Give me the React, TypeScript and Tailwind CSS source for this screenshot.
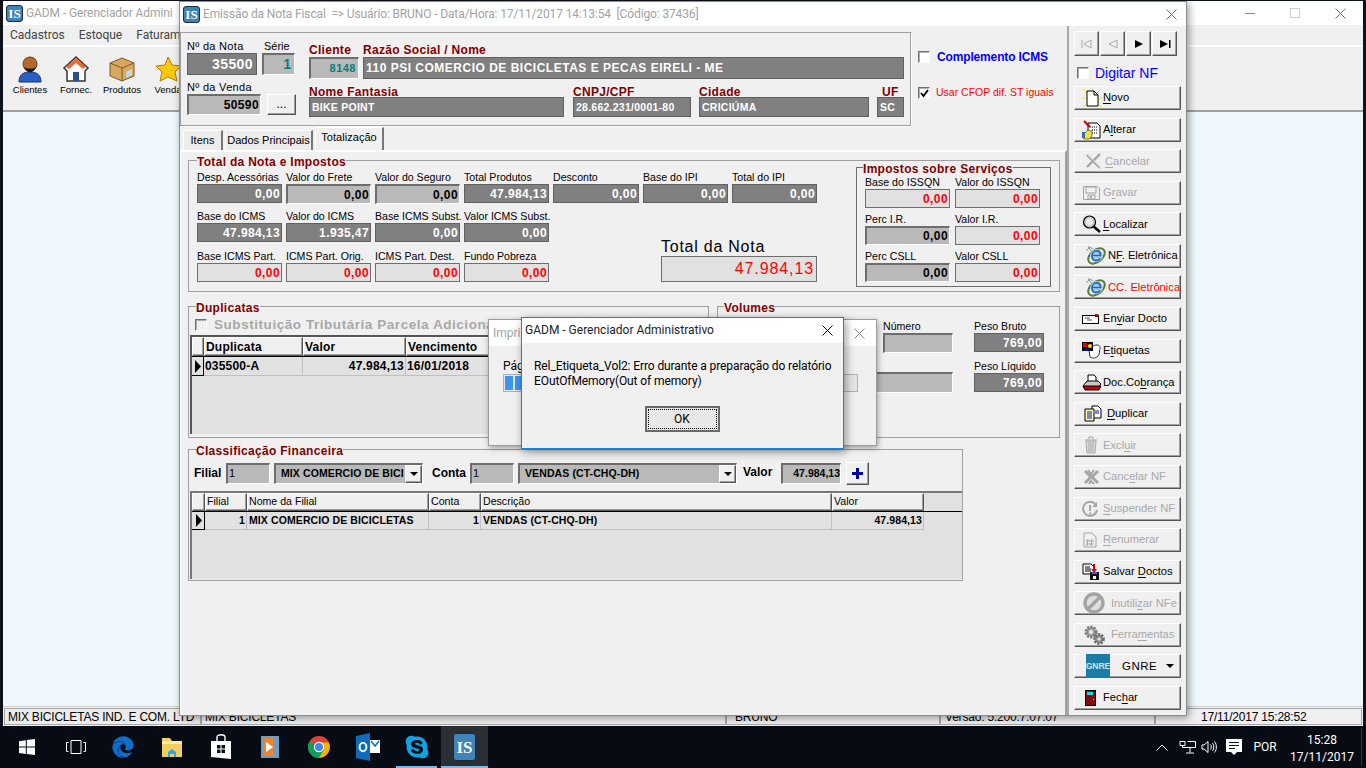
import React from 'react';
import { FaEdge, FaSkype } from 'react-icons/fa';

// --- small drawings used by the toolbar, the side buttons and the taskbar ---

const IsLogo: React.FC<{ size?: string }> = ({ size = 'w-[17px] h-[17px] text-[13px]' }) => (
  <span className={`${size} inline-flex items-center justify-center rounded-[3px] border border-[#1d2a35] bg-[#3d84b8] text-white font-bold leading-none [font-family:'Liberation_Serif',serif]`}>
    IS
  </span>
);

const Svg: React.FC<{ w?: number; h?: number; box?: string; children: React.ReactNode }> = ({ w = 20, h = 20, box, children }) => (
  <svg width={w} height={h} viewBox={box ?? `0 0 ${w} ${h}`} className="shrink-0">{children}</svg>
);

const PersonIcon = () => (
  <Svg w={28} h={28}>
    <path d="M3 27c0-7 4-10 11-10s11 3 11 10z" fill="#2a5fc4" stroke="#12306e" />
    <circle cx="14" cy="9" r="7" fill="#b5692b" stroke="#6b3a14" />
    <path d="M8 12c2 7 10 7 12 0-2 2-10 2-12 0z" fill="#1c1c1c" />
  </Svg>
);
const HouseIcon = () => (
  <Svg w={28} h={28}>
    <path d="M14 2 2 13l3 3v10h18V16l3-3z" fill="#fff" stroke="#333" strokeWidth="1.5" />
    <path d="M14 3 4 12l3 2 7-6 7 6 3-2z" fill="#ee6a2c" />
    <rect x="11" y="17" width="6" height="9" fill="#2c4f8f" />
  </Svg>
);
const BoxIcon = () => (
  <Svg w={28} h={28}>
    <path d="M14 3 2 8v13l12 5 12-5V8z" fill="#d9a860" stroke="#7c5a25" />
    <path d="M2 8l12 5 12-5M14 13v13" fill="none" stroke="#7c5a25" />
    <path d="M18 17l6-3v6l-6 3z" fill="#c7d6ec" />
  </Svg>
);
const StarIcon = () => (
  <Svg w={28} h={28}>
    <path d="M14 2l4 8 9 1-6 6 2 9-9-4-8 4 2-9-6-6 9-1z" fill="#fbc70f" stroke="#b07c06" />
  </Svg>
);

const NovoIcon = () => (
  <Svg>
    <g stroke="#f5ea00" strokeWidth="1"><path d="M1 1l4 4M19 1l-4 4M1 19l4-3M19 19l-4-3M0 10h3M17 10h3M10 0v2" /></g>
    <path d="M5 3h7l4 4v11H5z" fill="#fff" stroke="#000" />
    <path d="M12 3v4h4" fill="none" stroke="#000" />
  </Svg>
);
const AlterarIcon = () => (
  <Svg>
    <path d="M6 3h9l3 3v12H6z" fill="#fff" stroke="#000" />
    <path d="M8 7h7M10 10h6M10 13h6" stroke="#000" strokeDasharray="1 1" />
    <path d="M2 1l6 6" stroke="#c00000" strokeWidth="2" />
    <path d="M0 13h3l3-3 4 1v5l-3 3H2l-2-2z" fill="#f2e23c" stroke="#444" strokeWidth=".7" />
    <rect x="0" y="12" width="3" height="6" fill="#2f6fb5" />
  </Svg>
);
const XIcon = () => (
  <Svg>
    <path d="M3 4l13 13M16 3 3 16" stroke="#a6a6a6" strokeWidth="2.4" />
    <path d="M4 4l13 13" stroke="#fff" strokeWidth=".6" />
  </Svg>
);
const FloppyIcon = () => (
  <Svg>
    <path d="M1.5 3.5h14l2 2v11h-16z" fill="none" stroke="#a3a3a3" />
    <rect x="4" y="4" width="10" height="6" fill="none" stroke="#a3a3a3" />
    <rect x="6" y="12" width="7" height="4" fill="none" stroke="#a3a3a3" />
    <rect x="8" y="13" width="2" height="2" fill="#a3a3a3" />
  </Svg>
);
const LoupeIcon = () => (
  <Svg>
    <path d="M11 12l7 6" stroke="#000" strokeWidth="2.4" />
    <circle cx="7.5" cy="8" r="6" fill="#d3d3d3" stroke="#000" strokeWidth="1.2" />
    <circle cx="7.5" cy="8" r="4" fill="#ececec" stroke="#a0a0a0" strokeDasharray="1 1" />
  </Svg>
);
const EIcon: React.FC = () => (
  <Svg w={22} h={21}>
    <path d="M1 6 5 2l3 2M3 1l3 5" stroke="#777" strokeWidth=".8" fill="none" />
    <ellipse cx="11.5" cy="11" rx="9.5" ry="6" transform="rotate(-40 11.5 11)" fill="none" stroke="#5b7a3a" strokeWidth="2" />
    <circle cx="11.5" cy="10.5" r="6.4" fill="#a8cbe8" />
    <path d="M7 10.5h8.5c0-3-1.7-4.6-4-4.6-2.6 0-4.5 2-4.500 4.900s1.900 4.700 4.400 4.700c1.700 0 3-.7 3.800-2" fill="none" stroke="#1e6cb0" strokeWidth="1.6" />
  </Svg>
);
const MailIcon = () => (
  <Svg w={18} h={12}>
    <rect x=".5" y="2.5" width="16" height="8" fill="#fff" stroke="#000" />
    <path d="M3 5h5M5 7h5" stroke="#555" />
    <rect x="13" y="1" width="3" height="3" fill="#c00000" />
    <rect x="15" y="1" width="1.5" height="1.5" fill="#00a000" />
  </Svg>
);
const TagsIcon = () => (
  <Svg w={20} h={17}>
    <path d="M11 4c4-2 8-1 7 3-1 2 0 5-2 7-3 3-6 2-8 1L7 8z" fill="#fff" stroke="#000" strokeWidth=".8" />
    <rect x="0" y="0" width="11" height="9" fill="#000" />
    <rect x="1" y="1" width="4" height="4" fill="#e00000" />
    <circle cx="8" cy="4" r="2" fill="#f5e400" />
    <path d="M2 9l2.500-3L7 9z" fill="#0018c0" />
  </Svg>
);
const PrinterIcon = () => (
  <Svg w={20} h={17}>
    <path d="M6 1h6l2 2v5H6z" fill="#fff" stroke="#000" />
    <path d="M5 7h11l3 3-2 3H2l-1-1z" fill="#c7c7c7" stroke="#000" />
    <path d="M1 12h18l-2 4H3z" fill="#c40000" stroke="#000" />
  </Svg>
);
const DocsIcon = () => (
  <Svg w={18} h={17}>
    <path d="M8 1h6l3 3v9H8z" fill="#fff" stroke="#000" />
    <path d="M1 4h9v12H1z" fill="#fff8b0" stroke="#000" />
    <path d="M3 7h5M3 9h5M3 11h5M3 13h5" stroke="#0018c0" />
    <path d="M11 6h4M11 8h4" stroke="#0018c0" />
  </Svg>
);
const TrashIcon = () => (
  <Svg w={14} h={18}>
    <path d="M1 4h12M5 3V1h4v2" stroke="#a8a8a8" fill="none" />
    <path d="M2 5h10l-1 12H3z" fill="#dcdcdc" stroke="#a8a8a8" />
    <path d="M5 6v10M7 6v10M9 6v10" stroke="#a8a8a8" />
  </Svg>
);
const XBoldIcon = () => (
  <Svg>
    <path d="M3 4l6 6-6 6M16 4l-6 6 6 6" stroke="#a6a6a6" strokeWidth="3" fill="none" />
    <path d="M6 3l3 4 3-4M7 17l2-3 3 3" stroke="#a6a6a6" strokeWidth="2" fill="none" />
  </Svg>
);
const SuspendIcon = () => (
  <Svg w={16} h={16}>
    <path d="M14 4A7 7 0 1 0 15 9" stroke="#a6a6a6" strokeWidth="2" fill="none" />
    <path d="M15 1v5h-5z" fill="#a6a6a6" />
    <path d="M8 4v6M8 11.5v2" stroke="#a6a6a6" strokeWidth="2" />
  </Svg>
);
const HashDocIcon = () => (
  <Svg w={14} h={16}>
    <path d="M1 1h8l4 4v10H1z" fill="none" stroke="#a6a6a6" />
    <path d="M5 7l-1 7M9 7l-1 7M3 9h8M3 12h8" stroke="#a6a6a6" />
  </Svg>
);
const SaveDocsIcon = () => (
  <Svg w={18} h={17}>
    <path d="M1 1h8l3 3v7H1z" fill="#fff" stroke="#000" />
    <path d="M3 4h5M3 6h6M3 8h6" stroke="#000" />
    <rect x="8" y="9" width="9" height="8" fill="#111" />
    <rect x="10" y="9" width="5" height="2" fill="#2a6fd6" />
    <rect x="11" y="13" width="3" height="3" fill="#fff" />
    <path d="M13 1v5h2l-3 4-3-4h2V1z" fill="#e00000" />
  </Svg>
);
const NoIcon = () => (
  <Svg w={22} h={22}>
    <circle cx="11" cy="11" r="9" fill="#dfdfdf" stroke="#a3a3a3" strokeWidth="3.4" />
    <path d="M5 17 17 5" stroke="#a3a3a3" strokeWidth="3.4" />
  </Svg>
);
const GearsIcon = () => (
  <Svg w={24} h={24}>
    <circle cx="9" cy="9" r="5" fill="#a3a3a3" stroke="#7a7a7a" strokeWidth="3" strokeDasharray="2 1.2" />
    <circle cx="9" cy="9" r="2" fill="#e8e8e8" />
    <circle cx="17" cy="16" r="4.4" fill="#8f8f8f" stroke="#6f6f6f" strokeWidth="3" strokeDasharray="2 1.2" />
    <circle cx="17" cy="16" r="1.6" fill="#e8e8e8" />
  </Svg>
);
const DoorIcon = () => (
  <Svg w={11} h={16}>
    <rect x=".5" y=".5" width="10" height="15" fill="#7c0f12" stroke="#000" />
    <rect x="2" y="2" width="6" height="3" fill="#19d6e8" />
    <rect x="8" y="9" width="1" height="1" fill="#f5e400" />
  </Svg>
);
const PlusIcon = () => (
  <Svg w={11} h={13}><path d="M4 1h3v4h4v3H7v4H4V8H0V5h4z" fill="#0000a0" /></Svg>
);

const FirstIcon = () => <Svg w={12} h={10}><path d="M1 1v8M10 1 3 5l7 4z" fill="none" stroke="#a8a8a8" /></Svg>;
const PrevIcon = () => <Svg w={12} h={10}><path d="M10 1 2 5l8 4z" fill="none" stroke="#a8a8a8" /></Svg>;
const NextIcon = () => <Svg w={10} h={10}><path d="M1 1l8 4-8 4z" fill="#000" /></Svg>;
const LastIcon = () => <Svg w={12} h={10}><path d="M1 1l8 4-8 4zM10 1h1.5v8H10z" fill="#000" /></Svg>;

const WinClose: React.FC<{ color?: string }> = ({ color = '#6f6f6f' }) => (
  <Svg w={11} h={11}><path d="M.5.5l10 10M10.5.5l-10 10" stroke={color} /></Svg>
);
const Tick = () => <Svg w={9} h={9}><path d="M1 4l2.5 3L8 1" fill="none" stroke="#000" strokeWidth="1.8" /></Svg>;
const DownTri = () => <Svg w={8} h={4}><path d="M0 0h8L4 4z" fill="#000" /></Svg>;

// --- form pieces ---

type Tone = 'gray' | 'sunken' | 'light';
const toneClass: Record<Tone, string> = {
  gray: 'bg-[#808080] border border-[#616161] text-white',
  sunken: 'bg-[#b9b9b9] border-t-2 border-l-2 border-r border-b border-t-[#6d6d6d] border-l-[#6d6d6d] border-r-white border-b-white text-black',
  light: 'bg-[#e1e1e1] border border-[#6e6e6e] text-[#ff0000]',
};

const Value: React.FC<{ tone: Tone; text?: string; cls?: string }> = ({ tone, text, cls = 'w-[85px] h-[19px]' }) => (
  <div className={`${cls} ${toneClass[tone]} flex items-center justify-end pr-[1px] text-[12px] font-bold tracking-[0.4px] leading-none overflow-hidden`}>
    {text}
  </div>
);

const Cell: React.FC<{ label: string; tone: Tone; text: string; cls?: string; w?: string }> = ({ label, tone, text, cls, w = 'w-[85px]' }) => (
  <div className={`${w} flex flex-col`}>
    <div className="h-[14px] text-[10.6px] leading-[14px] whitespace-nowrap">{label}</div>
    <Value tone={tone} text={text} cls={cls} />
  </div>
);

const Legend: React.FC<{ text: string; cls: string }> = ({ text, cls }) => (
  <div className={`${cls} w-fit bg-[#f0f0f0] text-[#800000] text-[12px] font-bold leading-[14px] tracking-[0.3px] whitespace-nowrap`}>{text}</div>
);

const TextBox: React.FC<{ text: string; cls: string; big?: boolean }> = ({ text, cls, big }) => (
  <div className={`${cls} bg-[#808080] border border-[#5f5f5f] text-white font-bold flex items-center pl-[2px] leading-none whitespace-nowrap ${big ? 'text-[12px] tracking-[0.5px]' : 'text-[10.5px] tracking-[0.25px]'}`}>
    {text}
  </div>
);

const RedLabel: React.FC<{ text: string; cls?: string }> = ({ text, cls = '' }) => (
  <div className={`${cls} h-[13px] text-[12px] leading-[13px] font-bold text-[#800000] tracking-[0.3px] whitespace-nowrap`}>{text}</div>
);

const raised = 'bg-[#f0f0f0] border border-t-white border-l-white border-r-[#555] border-b-[#555] shadow-[inset_-1px_-1px_0_#a0a0a0]';

const CheckBox: React.FC<{ checked?: boolean; disabled?: boolean }> = ({ checked, disabled }) => (
  <div className={`w-[12px] h-[12px] shrink-0 border-t border-l border-t-[#707070] border-l-[#707070] border-r border-b border-r-white border-b-white flex items-center justify-center shadow-[inset_1px_1px_0_#b0b0b0] ${disabled ? 'bg-[#f0f0f0]' : 'bg-white'}`}>
    {checked && <Tick />}
  </div>
);

const HeadCell: React.FC<{ text: string; w: string; bold?: boolean }> = ({ text, w, bold }) => (
  <div className={`${w} h-full shrink-0 ${raised} flex items-center pl-[1px] whitespace-nowrap overflow-hidden ${bold ? 'text-[12px] font-bold tracking-[0.2px]' : 'text-[10.6px]'}`}>{text}</div>
);
const RowCell: React.FC<{ text?: string; w: string; right?: boolean; tight?: boolean }> = ({ text, w, right, tight }) => (
  <div className={`${w} h-full shrink-0 border-r border-b border-[#c0c0c0] flex items-center font-bold whitespace-nowrap overflow-hidden ${right ? 'justify-end pr-[1px]' : tight ? 'pl-[2px]' : 'pl-[1px]'} ${tight ? 'text-[10.5px] tracking-[0.1px]' : 'text-[12px] tracking-[0.2px]'}`}>{text}</div>
);
const Pointer = () => <Svg w={7} h={13}><path d="M1 0l6 6.5L1 13z" fill="#000" /></Svg>;

// --- side buttons ---

const U: React.FC<{ children: string }> = ({ children }) => <span className="underline underline-offset-[2px]">{children}</span>;

type SideBtn = { icon: React.ReactNode; pad: string; slot: string; body: React.ReactNode; off?: boolean; red?: boolean };

const sideButtons: SideBtn[] = [
  { icon: <NovoIcon />, pad: 'pl-[7px]', slot: 'w-[21px]', body: <><U>N</U>ovo</> },
  { icon: <AlterarIcon />, pad: 'pl-[7px]', slot: 'w-[21px]', body: <>A<U>l</U>terar</> },
  { icon: <XIcon />, pad: 'pl-[9px]', slot: 'w-[21px]', off: true, body: <><U>C</U>ancelar</> },
  { icon: <FloppyIcon />, pad: 'pl-[7px]', slot: 'w-[21px]', off: true, body: <>G<U>r</U>avar</> },
  { icon: <LoupeIcon />, pad: 'pl-[7px]', slot: 'w-[21px]', body: <><U>L</U>ocalizar</> },
  { icon: <EIcon />, pad: 'pl-[10px]', slot: 'w-[23px]', body: <>N<U>F</U>. Eletrônica</> },
  { icon: <EIcon />, pad: 'pl-[10px]', slot: 'w-[23px]', red: true, body: <>CC. Eletrônica</> },
  { icon: <MailIcon />, pad: 'pl-[7px]', slot: 'w-[21px]', body: <>En<U>v</U>iar Docto</> },
  { icon: <TagsIcon />, pad: 'pl-[7px]', slot: 'w-[21px]', body: <>E<U>t</U>iquetas</> },
  { icon: <PrinterIcon />, pad: 'pl-[7px]', slot: 'w-[21px]', body: <>Doc.Co<U>b</U>rança</> },
  { icon: <DocsIcon />, pad: 'pl-[9px]', slot: 'w-[23px]', body: <><U>D</U>uplicar</> },
  { icon: <TrashIcon />, pad: 'pl-[9px]', slot: 'w-[19px]', off: true, body: <>Excl<U>u</U>ir</> },
  { icon: <XBoldIcon />, pad: 'pl-[7px]', slot: 'w-[21px]', off: true, body: <>Canc<U>e</U>lar NF</> },
  { icon: <SuspendIcon />, pad: 'pl-[7px]', slot: 'w-[21px]', off: true, body: <><U>S</U>uspender NF</> },
  { icon: <HashDocIcon />, pad: 'pl-[8px]', slot: 'w-[20px]', off: true, body: <><U>R</U>enumerar</> },
  { icon: <SaveDocsIcon />, pad: 'pl-[7px]', slot: 'w-[21px]', body: <>Salvar <U>D</U>octos</> },
  { icon: <NoIcon />, pad: 'pl-[8px]', slot: 'w-[28px]', off: true, body: <>Inutili<U>z</U>ar NFe</> },
  { icon: <GearsIcon />, pad: 'pl-[7px]', slot: 'w-[29px]', off: true, body: <>Ferra<U>m</U>entas</> },
];

const SideButton: React.FC<{ b: SideBtn }> = ({ b }) => (
  <div className={`${raised} ${b.pad} w-[107px] h-[24px] flex items-center text-[11.2px] leading-none whitespace-nowrap ${b.off ? 'text-[#a8a8a8]' : b.red ? 'text-[#ff0000]' : 'text-black'}`}>
    <span className={`${b.slot} shrink-0 flex items-center`}>{b.icon}</span>
    <span>{b.body}</span>
  </div>
);

// --- taskbar ---

const WindowsIcon = () => (
  <Svg w={16} h={16}><path d="M0 2.2 6.8 1.2v6.4H0zM7.8 1l8.2-1v7.6H7.8zM0 8.6h6.8V15L0 14zM7.8 8.6H16V16l-8.2-1.1z" fill="#fff" /></Svg>
);
const TaskViewIcon = () => (
  <Svg w={20} h={14}><path d="M5 .5h10v13H5zM2.5 2.5H.5v9h2M17.5 2.5h2v9h-2" fill="none" stroke="#fff" /></Svg>
);
const FolderIcon = () => (
  <Svg w={22} h={23}>
    <path d="M1 2h8l2 3h10v16H1z" fill="#f3cf63" />
    <path d="M1 5h20v3H1z" fill="#fdeba6" />
    <path d="M7 21v-5l4-3 4 3v5z" fill="#31a8d8" />
    <rect x="9" y="18" width="4" height="3" fill="#f3cf63" />
  </Svg>
);
const StoreIcon = () => (
  <Svg w={22} h={26}>
    <path d="M1 7h20v18L1 23z" fill="#fff" />
    <path d="M7 7V3c0-3 8-3 8 0v4" fill="none" stroke="#fff" strokeWidth="1.4" />
    <path d="M7 11h3.5v3.5H7zM11.5 11H15v3.5h-3.5zM7 15.5h3.5V19H7zM11.5 15.5H15V19h-3.5z" fill="#0b1018" />
  </Svg>
);
const MediaIcon = () => (
  <Svg w={20} h={26}>
    <rect x="1" y="2" width="18" height="22" fill="#6e9cc0" />
    <rect x="3" y="4" width="11" height="18" fill="#f0822a" />
    <path d="M6 8l7 5-7 5z" fill="#fff" />
  </Svg>
);
const ChromeIcon = () => (
  <Svg w={22} h={30} box="0 0 24 24">
    <circle cx="12" cy="12" r="12" fill="#db4437" />
    <path d="M12 12 1.6 6A12 12 0 0 0 12 24l5-7z" fill="#0f9d58" />
    <path d="M12 7h10.6A12 12 0 0 1 12 24l5.2-9z" fill="#f4b400" />
    <circle cx="12" cy="12" r="5.6" fill="#fff" />
    <circle cx="12" cy="12" r="4.4" fill="#4285f4" />
  </Svg>
);
const OutlookIcon = () => (
  <Svg w={24} h={30}>
    <path d="M0 4 14 1v28L0 26z" fill="#0f6cbd" />
    <ellipse cx="7" cy="15" rx="3.4" ry="4.2" fill="none" stroke="#fff" strokeWidth="2" />
    <rect x="14" y="8" width="10" height="13" fill="#fff" />
    <path d="M15 9l4 5 4-5" fill="none" stroke="#0f6cbd" strokeWidth="1.5" />
  </Svg>
);
const TrayNet = () => (
  <Svg w={17} h={15}><path d="M1 1.5h5v4H1zM3.5 5.5v2h13v-6h-8M11 7.5v5M7 13h8" fill="none" stroke="#fff" /></Svg>
);
const TrayVol = () => (
  <Svg w={16} h={14}><path d="M1 5v4h2l4 3.5v-11L3 5zM9.500 4.500c1 1.500 1 3.500 0 5M11.500 3c1.800 2.200 1.800 5.800 0 8M13.500 1.500c2.500 3 2.500 8 0 11" fill="none" stroke="#fff" /></Svg>
);
const TrayNote = () => (
  <Svg w={16} h={17}><path d="M0 0h16v13h-5l-3 3-3-3H0z" fill="#fff" /><path d="M3 3.500h10M3 6.500h10M3 9.500h6" stroke="#0b1018" /></Svg>
);
const TrayUp = () => <Svg w={12} h={7}><path d="M.5 6.500 6 1l5.500 5.500" fill="none" stroke="#fff" /></Svg>;

const Task: React.FC<{ children: React.ReactNode; w?: string; bar?: boolean; active?: boolean }> = ({ children, w = 'w-[49px]', bar, active }) => (
  <div className={`${w} h-full relative flex items-center justify-center ${active ? 'bg-[#2b2e33]' : ''}`}>
    {children}
    {bar && <div className={`absolute bottom-0 h-[2px] bg-[#76b9ed] ${active ? 'inset-x-0' : 'inset-x-[4px]'}`} />}
  </div>
);

// --- page ---

const Toolbar = () => (
  <div className="h-[67px] bg-[#f0f0f0] border-t-2 border-t-white border-b-2 border-b-[#a0a0a0] flex pl-[4px] pt-[8px]">
    {[
      { icon: <PersonIcon />, text: 'Clientes' },
      { icon: <HouseIcon />, text: 'Fornec.' },
      { icon: <BoxIcon />, text: 'Produtos' },
      { icon: <StarIcon />, text: 'Venda' },
    ].map((t) => (
      <div key={t.text} className="w-[46px] flex flex-col items-center">
        {t.icon}
        <div className="text-[9.5px] leading-[12px] mt-[1px] text-black whitespace-nowrap">{t.text}</div>
      </div>
    ))}
  </div>
);

const sunkenBox = 'bg-[#b9b9b9] border-t-2 border-l-2 border-r border-b border-t-[#6d6d6d] border-l-[#6d6d6d] border-r-white border-b-white';

const NoteWindow = () => (
  <div className="absolute left-[179px] top-[1px] w-[1008px] h-[715px] bg-[#f0f0f0] border border-[#8d8d8d] shadow-[2px_2px_8px_rgba(0,0,0,.4)] flex flex-col text-black">
    <div className="h-[24px] bg-white flex items-center pl-[3px] pr-[9px] shrink-0">
      <IsLogo />
      <div className="ml-[3px] text-[12px] text-[#a3a3a3] whitespace-pre tracking-[-0.13px] [font-family:Roboto,sans-serif]">
        {'Emissão da Nota Fiscal  => Usuário: BRUNO - Data/Hora: 17/11/2017 14:13:54  [Código: 37436]'}
      </div>
      <div className="ml-auto"><WinClose /></div>
    </div>
    <div className="flex-1 flex min-h-0">
      <div className="w-[887px] shrink-0 flex flex-col">
        {/* cabeçalho */}
        <div className="flex pt-[6px] shrink-0">
          <div className="w-[732px] h-[95px] border-t border-l border-t-[#a0a0a0] border-l-[#a0a0a0] border-r border-b border-r-white border-b-white shadow-[inset_-1px_-1px_0_#a0a0a0] flex pl-[6px]">
            <div className="w-[122px] pt-[6px]">
              <div className="flex">
                <div className="w-[75px]">
                  <div className="h-[14px] text-[11px] leading-[14px] tracking-[0.3px]">Nº da Nota</div>
                  <div className="w-[70px] h-[22px] bg-[#808080] border border-[#5f5f5f] flex items-center justify-end pr-[3px] text-white font-bold text-[14px] tracking-[0.4px]">35500</div>
                </div>
                <div>
                  <div className="h-[14px] text-[11px] leading-[14px] pl-[2px]">Série</div>
                  <div className={`${sunkenBox} w-[33px] h-[22px] flex items-center justify-end pr-[3px] text-[#008080] font-bold text-[14px]`}>1</div>
                </div>
              </div>
              <div className="h-[14px] mt-[5px] text-[11px] leading-[14px] tracking-[0.3px]">Nº da Venda</div>
              <div className="flex">
                <div className={`${sunkenBox} w-[74px] h-[21px] flex items-center justify-end pr-[1px] font-bold text-[12px] tracking-[0.4px]`}>50590</div>
                <div className={`${raised} ml-[6px] w-[29px] h-[21px] flex items-center justify-center text-[12px] pb-[2px]`}>...</div>
              </div>
            </div>
            <div className="flex-1 pt-[11px]">
              <div className="flex">
                <div className="w-[54px]">
                  <RedLabel text="Cliente" />
                  <div className={`${sunkenBox} w-[50px] h-[22px] flex items-center justify-end pr-[2px] text-[#008080] font-bold text-[11px] tracking-[0.5px]`}>8148</div>
                </div>
                <div className="flex-1">
                  <RedLabel text="Razão Social / Nome" />
                  <TextBox big text="110 PSI COMERCIO DE BICICLETAS E PECAS EIRELI - ME" cls="w-[541px] h-[22px]" />
                </div>
              </div>
              <div className="flex mt-[7px] gap-[8px]">
                <div className="w-[255px]">
                  <RedLabel text="Nome Fantasia" cls="mb-[-2px]" />
                  <TextBox text="BIKE POINT" cls="w-full h-[20px]" />
                </div>
                <div className="w-[118px] ml-[1px]">
                  <RedLabel text="CNPJ/CPF" cls="mb-[-2px]" />
                  <TextBox text="28.662.231/0001-80" cls="w-full h-[20px]" />
                </div>
                <div className="w-[170px]">
                  <RedLabel text="Cidade" cls="mb-[-2px]" />
                  <TextBox text="CRICIÚMA" cls="w-full h-[20px]" />
                </div>
                <div className="w-[27px]">
                  <RedLabel text="UF" cls="mb-[-2px] pl-[5px]" />
                  <TextBox text="SC" cls="w-full h-[20px]" />
                </div>
              </div>
            </div>
          </div>
          <div className="pl-[6px] pt-[18px]">
            <div className="flex items-center gap-[7px] h-[14px]">
              <CheckBox />
              <span className="text-[12px] font-bold text-[#0000ff] whitespace-nowrap tracking-[-0.15px]">Complemento ICMS</span>
            </div>
            <div className="flex items-center gap-[6px] h-[14px] mt-[22px]">
              <CheckBox checked />
              <span className="text-[10.5px] text-[#ff0000] whitespace-nowrap">Usar CFOP dif. ST iguais</span>
            </div>
          </div>
        </div>
        {/* abas */}
        <div className="h-[23px] flex items-end pl-[3px] gap-[2px] shrink-0 text-[11px]">
          <div className="w-[40px] h-[20px] bg-[#ececec] border-t border-l border-t-white border-l-white border-r-2 border-r-[#777] flex items-center justify-center">Itens</div>
          <div className="w-[88px] h-[20px] bg-[#ececec] border-t border-l border-t-white border-l-white border-r-2 border-r-[#777] flex items-center justify-center">Dados Principais</div>
          <div className="w-[69px] h-[23px] bg-[#f0f0f0] border-t border-l border-t-white border-l-white border-r-2 border-r-[#777] flex items-center justify-center pb-[3px] tracking-[0.05px]">Totalização</div>
        </div>
        <div className="flex-1 border-t-2 border-t-white border-l border-l-white border-r-2 border-r-[#a0a0a0] pl-[7px] pt-[8px] flex flex-col">
          {/* totais */}
          <div className="w-[872px] h-[132px] border border-[#a0a0a0] flex shrink-0">
            <div className="w-[667px] pl-[8px]">
              <Legend text="Total da Nota e Impostos" cls="-mt-[6px] mb-[1px]" />
              <div className="flex gap-[4px]">
                <Cell label="Desp. Acessórias" tone="gray" text="0,00" />
                <Cell label="Valor do Frete" tone="sunken" text="0,00" cls="w-[85px] h-[20px]" />
                <Cell label="Valor do Seguro" tone="sunken" text="0,00" cls="w-[85px] h-[20px]" />
                <Cell label="Total Produtos" tone="gray" text="47.984,13" />
                <Cell label="Desconto" tone="gray" text="0,00" w="w-[86px]" cls="w-[86px] h-[19px]" />
                <Cell label="Base do IPI" tone="gray" text="0,00" />
                <Cell label="Total do IPI" tone="gray" text="0,00" />
              </div>
              <div className="flex mt-[5px]">
                <div className="grid grid-cols-[85px_85px_85px_85px] gap-x-[4px] gap-y-[7px]">
                  <Cell label="Base do ICMS" tone="gray" text="47.984,13" />
                  <Cell label="Valor do ICMS" tone="gray" text="1.935,47" />
                  <Cell label="Base ICMS Subst." tone="gray" text="0,00" />
                  <Cell label="Valor ICMS Subst." tone="gray" text="0,00" />
                  <Cell label="Base ICMS Part." tone="light" text="0,00" />
                  <Cell label="ICMS Part. Orig." tone="light" text="0,00" />
                  <Cell label="ICMS Part. Dest." tone="light" text="0,00" />
                  <Cell label="Fundo Pobreza" tone="light" text="0,00" />
                </div>
                <div className="ml-[112px] pt-[28px]">
                  <div className="h-[19px] text-[16px] leading-[19px] tracking-[0.75px]">Total da Nota</div>
                  <div className="w-[156px] h-[26px] bg-[#e1e1e1] border border-[#6e6e6e] flex items-center justify-end pr-[2px] text-[#ff0000] text-[16px] tracking-[0.9px]">47.984,13</div>
                </div>
              </div>
            </div>
            <div className="mt-[6px] w-[195px] h-[120px] border border-[#6e6e6e] pl-[8px]">
              <Legend text="Impostos sobre Serviços" cls="-mt-[6px] -ml-[2px]" />
              <div className="grid grid-cols-[85px_85px] grid-rows-[33px_33px_33px] gap-x-[5px] gap-y-[4px] -mt-[1px]">
                <Cell label="Base do ISSQN" tone="light" text="0,00" />
                <Cell label="Valor do ISSQN" tone="light" text="0,00" />
                <Cell label="Perc I.R." tone="sunken" text="0,00" cls="w-[85px] h-[20px]" />
                <Cell label="Valor I.R." tone="light" text="0,00" />
                <Cell label="Perc CSLL" tone="sunken" text="0,00" cls="w-[85px] h-[20px]" />
                <Cell label="Valor CSLL" tone="light" text="0,00" />
              </div>
            </div>
          </div>
          {/* duplicatas + volumes */}
          <div className="flex mt-[14px] gap-[8px] shrink-0">
            <div className="w-[521px] h-[132px] border border-[#a0a0a0]">
              <Legend text="Duplicatas" cls="ml-[7px] -mt-[6px]" />
              <div className="flex items-center gap-[7px] pl-[6px] h-[16px] mt-[2px]">
                <CheckBox disabled />
                <span className="text-[13.5px] font-bold text-[#a8a8a8] whitespace-nowrap tracking-[0.55px]">Substituição Tributária Parcela Adicional</span>
              </div>
              <div className="ml-[1px] mt-[2px] w-[517px] h-[99px] bg-[#e1e1e1] border-t-2 border-l-2 border-t-[#555] border-l-[#555]">
                <div className="h-[19px] flex">
                  <HeadCell text="" w="w-[12px]" />
                  <HeadCell bold text="Duplicata" w="w-[99px]" />
                  <HeadCell bold text="Valor" w="w-[103px]" />
                  <HeadCell bold text="Vencimento" w="w-[100px]" />
                </div>
                <div className="h-[20px] flex border-t border-t-black">
                  <div className="w-[12px] h-full border-r border-b border-black flex items-center justify-center"><Pointer /></div>
                  <RowCell text="035500-A" w="w-[99px]" />
                  <RowCell right text="47.984,13" w="w-[103px]" />
                  <RowCell text="16/01/2018" w="w-[100px]" />
                </div>
              </div>
            </div>
            <div className="w-[343px] h-[132px] border border-[#a0a0a0] flex">
              <div className="w-[256px]">
                <Legend text="Volumes" cls="ml-[6px] -mt-[6px]" />
                <div className="pl-[165px] mt-[4px]">
                  <div className="h-[14px] text-[10.6px] leading-[14px]">Número</div>
                  <div className={`${sunkenBox} w-[70px] h-[20px]`} />
                </div>
                <div className={`${sunkenBox} ml-[82px] mt-[19px] w-[153px] h-[21px]`} />
              </div>
              <div className="pt-[12px]">
                <Cell label="Peso Bruto" tone="gray" text="769,00" w="w-[70px]" cls="w-[70px] h-[19px]" />
                <div className="h-[7px]" />
                <Cell label="Peso Líquido" tone="gray" text="769,00" w="w-[70px]" cls="w-[70px] h-[19px]" />
              </div>
            </div>
          </div>
          {/* classificação */}
          <div className="w-[775px] h-[132px] mt-[11px] border border-[#a0a0a0] shrink-0">
            <Legend text="Classificação Financeira" cls="ml-[7px] -mt-[6px]" />
            <div className="flex items-center pl-[5px] h-[24px] mt-[3px] text-[12px] font-bold">
              <span className="w-[32px]">Filial</span>
              <div className={`${sunkenBox} w-[44px] h-[21px] flex items-center pl-[1px] font-normal text-[11px]`}>1</div>
              <div className={`${sunkenBox} ml-[4px] w-[149px] h-[21px] flex items-center justify-between pl-[5px] text-[10.5px] tracking-[0.1px]`}>
                <span className="whitespace-nowrap">MIX COMERCIO DE BICI</span>
                <div className={`${raised} w-[17px] h-[18px] shrink-0 flex items-center justify-center`}><DownTri /></div>
              </div>
              <span className="ml-[9px] w-[38px]">Conta</span>
              <div className={`${sunkenBox} w-[44px] h-[21px] flex items-center pl-[1px] font-normal text-[11px]`}>1</div>
              <div className={`${sunkenBox} ml-[4px] w-[219px] h-[21px] flex items-center justify-between pl-[5px] text-[10.5px] tracking-[0.1px]`}>
                <span>VENDAS (CT-CHQ-DH)</span>
                <div className={`${raised} w-[17px] h-[18px] shrink-0 flex items-center justify-center`}><DownTri /></div>
              </div>
              <span className="ml-[6px] w-[38px] pb-[3px]">Valor</span>
              <div className={`${sunkenBox} w-[60px] h-[21px] flex items-center justify-end text-[10.5px]`}>47.984,13</div>
              <div className={`${raised} ml-[5px] w-[23px] h-[23px] flex items-center justify-center`}><PlusIcon /></div>
            </div>
            <div className="ml-[1px] mt-[6px] w-[772px] h-[88px] bg-[#e1e1e1] border-t-2 border-l-2 border-t-[#777] border-l-[#777]">
              <div className="h-[18px] flex">
                <HeadCell text="" w="w-[13px]" />
                <HeadCell text="Filial" w="w-[42px]" />
                <HeadCell text="Nome da Filial" w="w-[182px]" />
                <HeadCell text="Conta" w="w-[52px]" />
                <HeadCell text="Descrição" w="w-[351px]" />
                <HeadCell text="Valor" w="w-[92px]" />
              </div>
              <div className="h-[19px] flex border-t border-t-black">
                <div className="w-[13px] h-full border-r border-b border-black flex items-center justify-center"><Pointer /></div>
                <RowCell tight right text="1" w="w-[42px]" />
                <RowCell tight text="MIX COMERCIO DE BICICLETAS" w="w-[182px]" />
                <RowCell tight right text="1" w="w-[52px]" />
                <RowCell tight text="VENDAS (CT-CHQ-DH)" w="w-[351px]" />
                <RowCell tight right text="47.984,13" w="w-[92px]" />
              </div>
            </div>
          </div>
        </div>
      </div>
      {/* botões laterais */}
      <div className="flex-1 border-l-2 border-l-[#a8a8a8] pl-[5px] pt-[5px]">
        <div className="flex gap-[1px]">
          {[<FirstIcon key="a" />, <PrevIcon key="b" />, <NextIcon key="c" />, <LastIcon key="d" />].map((ic, i) => (
            <div key={i} className={`${raised} w-[25px] h-[25px] flex items-center justify-center`}>{ic}</div>
          ))}
        </div>
        <div className="flex items-center gap-[6px] h-[14px] mt-[10px] ml-[3px]">
          <CheckBox />
          <span className="text-[14px] text-[#0000ff] leading-none whitespace-nowrap">Digitar NF</span>
        </div>
        <div className="h-[624px] mt-[6px] flex flex-col justify-between">
          {sideButtons.map((b, i) => <SideButton key={i} b={b} />)}
          <div className={`${raised} w-[107px] h-[24px] flex items-center text-[11.5px] pl-[11px]`}>
            <div className="w-[24px] h-[24px] shrink-0 bg-[#1b7ca8] text-[#cfe7ef] text-[8.5px] font-bold flex items-center justify-center">GNRE</div>
            <span className="ml-[12px] tracking-[0.5px]">GNRE</span>
            <span className="ml-[9px]"><DownTri /></span>
          </div>
          <SideButton b={{ icon: <DoorIcon />, pad: 'pl-[10px]', slot: 'w-[18px]', body: <>Fec<U>h</U>ar</> }} />
        </div>
      </div>
    </div>
  </div>
);

const PrintDialog = () => (
  <div className="absolute left-[488px] top-[319px] w-[389px] h-[127px] bg-[#f0f0f0] border border-[#9c9c9c] shadow-[1px_2px_6px_rgba(0,0,0,.35)] [font-family:Roboto,sans-serif]">
    <div className="h-[26px] bg-white flex items-center justify-between pl-[4px] pr-[11px] text-[12px] text-[#a3a3a3]">
      <span>Impri</span>
      <WinClose color="#8a8a8a" />
    </div>
    <div className="pl-[14px] pr-[18px] pt-[13px]">
      <div className="h-[14px] text-[12px] leading-[14px]">Pág</div>
      <div className="mt-[1px] h-[18px] bg-[#e6e6e6] border border-[#b0b0b0] flex gap-[2px] p-[1px]">
        <div className="w-[8px] bg-[#3a96f0]" />
        <div className="w-[8px] bg-[#3a96f0]" />
      </div>
    </div>
  </div>
);

const ErrorDialog = () => (
  <div className="absolute left-[521px] top-[317px] w-[323px] h-[132px] bg-[#f0f0f0] border border-[#1883d7] shadow-[2px_3px_9px_rgba(0,0,0,.4)] text-black [font-family:Roboto,sans-serif] flex flex-col">
    <div className="h-[25px] bg-white flex items-center justify-between pl-[3px] pr-[10px] pb-[1px] text-[12px] text-[#222] shrink-0">
      <span>GADM - Gerenciador Administrativo</span>
      <WinClose color="#000" />
    </div>
    <div className="pl-[12px] pt-[16px] text-[12px] leading-[15px] tracking-[-0.1px]">
      <div className="whitespace-nowrap">Rel_Etiqueta_Vol2: Erro durante a preparação do relatório</div>
      <div className="whitespace-nowrap">EOutOfMemory(Out of memory)</div>
    </div>
    <div className="flex justify-center mt-[17px] pr-[1px]">
      <div className="w-[75px] h-[26px] bg-[#e8e8e8] border-2 border-[#6a6a6a] p-[1px]">
        <div className="w-full h-full border border-dotted border-black flex items-center justify-center text-[12px]">OK</div>
      </div>
    </div>
  </div>
);

const Taskbar = () => (
  <div className="h-[42px] flex text-white bg-[#070b13]">
    <Task w="w-[54px]"><WindowsIcon /></Task>
    <Task w="w-[44px]"><TaskViewIcon /></Task>
    <Task><FaEdge className="text-[#0f6cc9] text-[22px]" /></Task>
    <Task><FolderIcon /></Task>
    <Task><StoreIcon /></Task>
    <Task><MediaIcon /></Task>
    <Task><ChromeIcon /></Task>
    <Task><OutlookIcon /></Task>
    <Task bar><FaSkype className="text-[#10a5e2] text-[26px]" /></Task>
    <Task bar active w="w-[47px]"><IsLogo size="w-[23px] h-[28px] text-[17px]" /></Task>
    <div className="flex-1" />
    <div className="flex items-center h-full [font-family:Roboto,sans-serif] text-[12px]">
      <div className="w-[24px] flex justify-center"><TrayUp /></div>
      <div className="w-[26px] flex justify-center"><TrayNet /></div>
      <div className="w-[18px] flex justify-center"><TrayVol /></div>
      <div className="w-[32px] flex justify-center"><TrayNote /></div>
      <div className="w-[30px] text-center">POR</div>
      <div className="ml-[3px] w-[78px] text-center leading-[17px] pt-[4px]">
        <div>15:28</div>
        <div>17/11/2017</div>
      </div>
      <div className="w-[1px] h-[38px] bg-[#33383f]" />
      <div className="w-[4px]" />
    </div>
  </div>
);

export default function App() {
  return (
    <div className="relative w-[1366px] h-[768px] overflow-hidden bg-[#0e131b] [font-family:'Liberation_Sans',Arial,sans-serif]">
      <div className="h-[726px] pt-[1px] px-[3px] flex flex-col">
        <div className="h-[24px] bg-white flex items-center pl-[3px] shrink-0">
          <IsLogo />
          <div className="ml-[3px] text-[12px] text-[#a3a3a3] whitespace-nowrap tracking-[-0.1px] [font-family:Roboto,sans-serif]">GADM - Gerenciador Admini</div>
          <div className="ml-auto flex items-center">
            <div className="w-[45px] flex justify-center"><div className="w-[10px] h-[1px] bg-[#8a8a8a]" /></div>
            <div className="w-[45px] flex justify-center"><div className="w-[10px] h-[10px] border border-[#cfcfcf]" /></div>
            <div className="w-[46px] flex justify-center"><WinClose /></div>
          </div>
        </div>
        <div className="h-[20px] bg-[#f0f0f0] flex items-center pl-[7px] gap-[14px] text-[12px] text-[#444] shrink-0 [font-family:Roboto,sans-serif]">
          <span>Cadastros</span>
          <span>Estoque</span>
          <span>Faturam</span>
        </div>
        <Toolbar />
        <div className="flex-1 bg-[#eff9fd]" />
        <div className="h-[20px] bg-[#f0f0f0] flex text-[12px] border-t border-t-[#d0d0d0] shrink-0 p-[1px] tracking-[-0.2px]">
          <div className="w-[197px] border border-[#a8a8a8] bg-[#ececec] pl-[3px] flex items-center whitespace-nowrap">MIX BICICLETAS IND. E COM. LTD</div>
          <div className="w-[525px] border border-[#a8a8a8] pl-[3px] flex items-center whitespace-nowrap">MIX BICICLETAS</div>
          <div className="w-[214px] border border-[#a8a8a8] pl-[8px] flex items-center whitespace-nowrap">BRUNO</div>
          <div className="w-[215px] border border-[#a8a8a8] pl-[4px] flex items-center whitespace-nowrap">Versão: 5.200.7.07.07</div>
          <div className="flex-1 border border-[#a8a8a8] pl-[45px] flex items-center whitespace-nowrap">17/11/2017 15:28:52</div>
        </div>
      </div>
      <Taskbar />
      <NoteWindow />
      <PrintDialog />
      <ErrorDialog />
    </div>
  );
}
